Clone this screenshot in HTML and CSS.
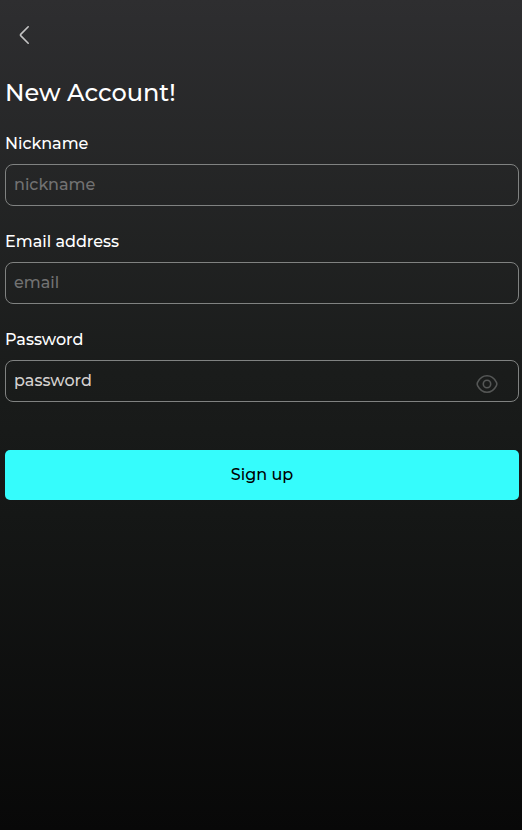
FILE: index.html
```html
<!DOCTYPE html>
<html lang="en">
<head>
<meta charset="utf-8">
<meta name="viewport" content="width=device-width, initial-scale=1">
<title>New Account</title>
<link rel="stylesheet" href="styles.css">
</head>
<body>
<main class="page">
  <button class="back" type="button" aria-label="Back">
    <svg width="12" height="20" viewBox="0 0 12 20" fill="none" stroke="currentColor" stroke-width="1.6" stroke-linecap="round" stroke-linejoin="round"><path d="M9.2 1.8 1.9 9.1Q1 10 1.9 10.9L9.2 18.2"/></svg>
  </button>
  <h1 class="title">New Account!</h1>
  <form class="form">
    <div class="field">
      <label class="label" for="nickname">Nickname</label>
      <div class="box"><input class="input" id="nickname" type="text" placeholder="nickname"></div>
    </div>
    <div class="field">
      <label class="label" for="email">Email address</label>
      <div class="box"><input class="input" id="email" type="email" placeholder="email"></div>
    </div>
    <div class="field">
      <label class="label" for="password">Password</label>
      <div class="box">
        <input class="input input-password" id="password" type="password" placeholder="password">
        <button class="reveal" type="button" aria-label="Show password">
          <svg width="22" height="20" viewBox="0 0 22 20" fill="none" stroke="currentColor" stroke-width="1.6"><path d="M1.7 8.2C3.8 4.2 7.2 1.8 11 1.8S18.2 4.2 20.3 8.2Q21.3 10 20.3 11.8C18.2 15.8 14.8 18.2 11 18.2S3.8 15.8 1.7 11.8Q.7 10 1.7 8.2Z"/><circle cx="11" cy="10" r="3.7"/></svg>
        </button>
      </div>
    </div>
    <button class="submit" type="submit">Sign up</button>
  </form>
</main>
</body>
</html>
```
FILE: styles.css
```css
* {
  box-sizing: border-box;
}

body {
  margin: 0;
  min-height: 100vh;
  background: linear-gradient(#2e2e30 0%, #1a1c1b 45%, #151716 62%, #080808 100%);
  color: #fff;
  font: 500 16px/20px Montserrat, Inter, sans-serif;
}

button,
input {
  border: 0;
  padding: 0;
  background: none;
  color: inherit;
  font: inherit;
}

.page {
  padding: 16px 3px 16px 5px;
}

.back {
  display: flex;
  align-items: center;
  justify-content: center;
  width: 40px;
  height: 38px;
  color: #c4c4c4;
}

.title {
  margin: 24px 0 26px;
  font-size: 24px;
  line-height: 30px;
  font-weight: 500;
}

.form {
  display: flex;
  flex-direction: column;
  gap: 26px;
}

.field {
  display: flex;
  flex-direction: column;
  gap: 10px;
}

.box {
  display: flex;
  height: 42px;
  padding: 0 20px 0 8px;
  border: 1px solid #808281;
  border-radius: 8px;
}

.input {
  flex: 1;
  min-width: 0;
  outline: none;
}

.input::placeholder {
  color: #727272;
  opacity: 1;
}

.input-password::placeholder {
  color: #d4d1cf;
}

.reveal {
  display: flex;
  align-items: flex-end;
  padding-bottom: 7px;
  color: #555756;
}

.submit {
  height: 50px;
  margin-top: 22px;
  border-radius: 5px;
  background: #35fcfc;
  color: #000;
}
```
